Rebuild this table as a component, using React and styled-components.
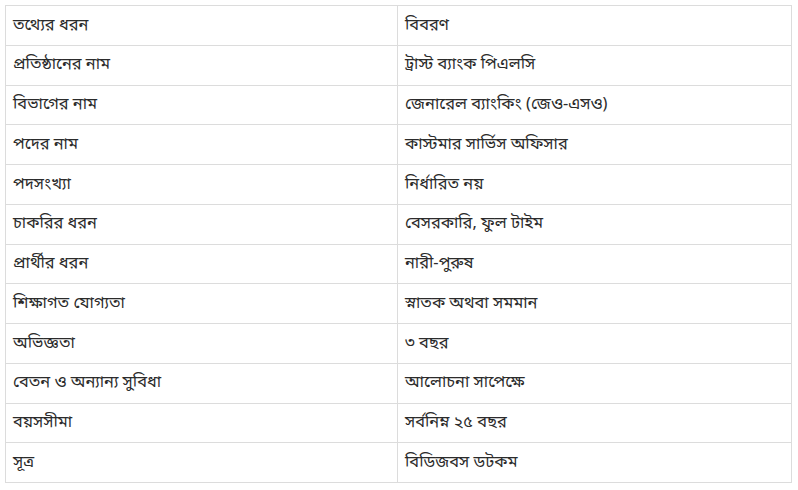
import styled, { createGlobalStyle } from "styled-components";

const GlobalStyle = createGlobalStyle`
  body {
    margin: 0;
    background: #fff;
    font-family: "Noto Sans Bengali", "Noto Sans", "DejaVu Sans", sans-serif;
  }
`;

const Page = styled.div`
  padding: 5px 7px 0 5px;
`;

const Table = styled.table`
  width: 787px;
  border-collapse: collapse;
  table-layout: fixed;
`;

const Row = styled.tr`
  height: 39.75px;
`;

const Cell = styled.td`
  padding: 2px 7px 0;
  border: 1px solid #dcdcdc;
  font-size: 16.4px;
  line-height: 1.3;
  color: #2b2b2b;
  vertical-align: middle;
  white-space: nowrap;
`;

const rows = [
  ["তথ্যের ধরন", "বিবরণ"],
  ["প্রতিষ্ঠানের নাম", "ট্রাস্ট ব্যাংক পিএলসি"],
  ["বিভাগের নাম", "জেনারেল ব্যাংকিং (জেও-এসও)"],
  ["পদের নাম", "কাস্টমার সার্ভিস অফিসার"],
  ["পদসংখ্যা", "নির্ধারিত নয়"],
  ["চাকরির ধরন", "বেসরকারি, ফুল টাইম"],
  ["প্রার্থীর ধরন", "নারী-পুরুষ"],
  ["শিক্ষাগত যোগ্যতা", "স্নাতক অথবা সমমান"],
  ["অভিজ্ঞতা", "৩ বছর"],
  ["বেতন ও অন্যান্য সুবিধা", "আলোচনা সাপেক্ষে"],
  ["বয়সসীমা", "সর্বনিম্ন ২৫ বছর"],
  ["সূত্র", "বিডিজবস ডটকম"],
];

export default function App() {
  return (
    <Page>
      <GlobalStyle />
      <Table>
        <colgroup>
          <col style={{ width: "392px" }} />
          <col />
        </colgroup>
        <tbody>
          {rows.map(([k, v]) => (
            <Row key={k}>
              <Cell>{k}</Cell>
              <Cell>{v}</Cell>
            </Row>
          ))}
        </tbody>
      </Table>
    </Page>
  );
}
